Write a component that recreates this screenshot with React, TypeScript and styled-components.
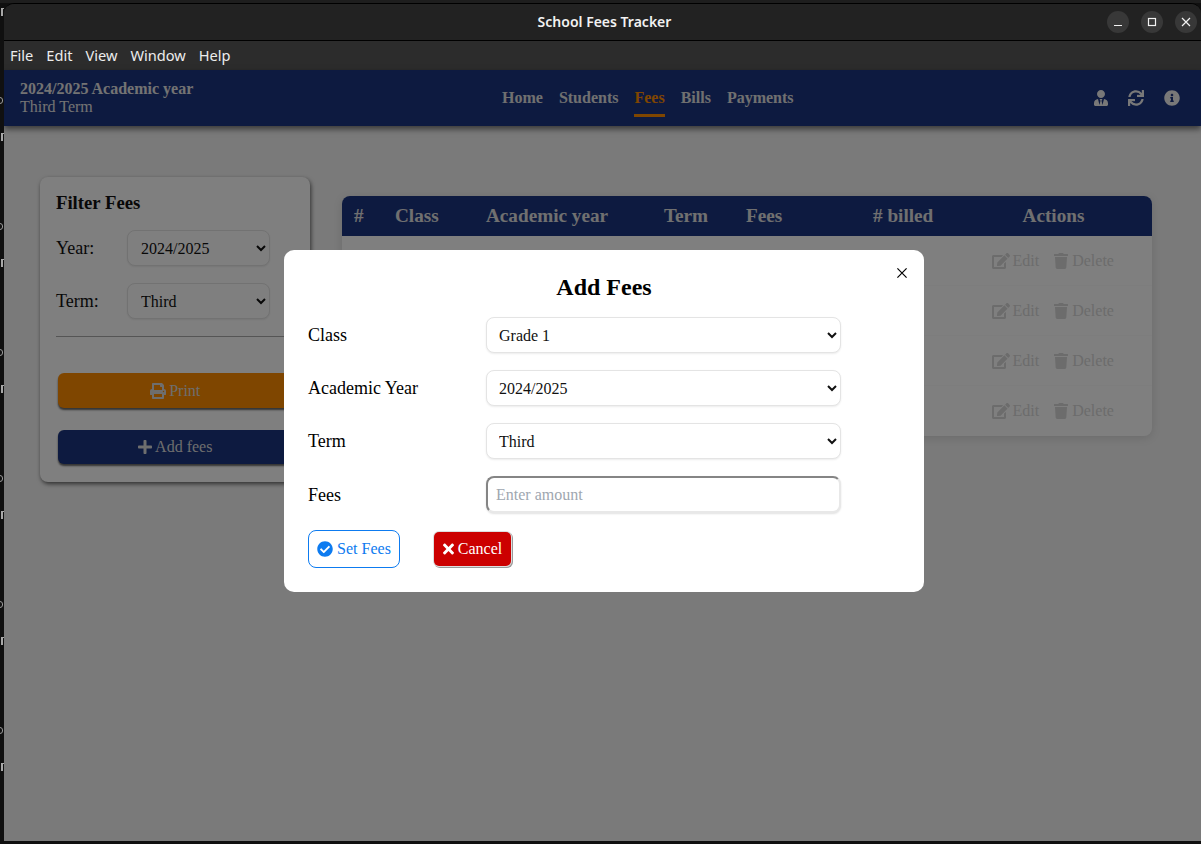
import React from 'react';
import styled, { createGlobalStyle } from 'styled-components';
import {
  FaCheckCircle,
  FaEdit,
  FaInfoCircle,
  FaPlus,
  FaPrint,
  FaSync,
  FaTimes,
  FaTrash,
  FaUserTie,
} from 'react-icons/fa';

const GlobalStyle = createGlobalStyle`
  html, body {
    margin: 0;
    padding: 0;
    height: 100%;
    overflow: hidden;
    background: #101010;
    font-family: "Liberation Serif", "Times New Roman", serif;
  }
  * { box-sizing: border-box; }
`;

const Desktop = styled.div`
  display: flex;
  height: 844px;
  padding-bottom: 3px;
  background: linear-gradient(#1e1e1e 0 3px, #101010 3px);
`;

const EdgeStrip = styled.div`
  width: 4px;
  flex: none;
  overflow: hidden;
  padding-top: 8px;
  display: flex;
  flex-direction: column;
`;

const EdgeGroup = styled.div<{ $first?: boolean }>`
  height: ${(p) => (p.$first ? 89 : 126)}px;
  flex: none;
  display: flex;
  flex-direction: column;
  gap: 29px;
`;

const EdgeRound = styled.span`
  width: 6px;
  height: 7px;
  margin-left: -3px;
  border: 1px solid #9a9a9a;
  border-radius: 3px;
`;

const EdgeHook = styled.span`
  width: 3px;
  height: 8px;
  margin-left: 1px;
  border-left: 2px solid #a8a8a8;
  border-top: 1px solid #a8a8a8;
`;

const Window = styled.div`
  flex: 1;
  margin-top: 3px;
  display: flex;
  flex-direction: column;
  border-top: 1px solid #000;
  border-radius: 10px 10px 0 0;
  overflow: hidden;
  background: #222;
`;

const TitleBar = styled.header`
  height: 37px;
  flex: none;
  position: relative;
  display: flex;
  align-items: center;
  justify-content: center;
  background: #222;
  border-bottom: 1px solid #000;
`;

const TitleText = styled.h1`
  margin: 0 0 1px 4px;
  font: 600 14px "Noto Sans", sans-serif;
  color: #f2f2f2;
`;

const WindowControls = styled.div`
  position: absolute;
  right: 4px;
  top: 7px;
  display: flex;
  gap: 12px;
`;

const WindowButton = styled.button`
  width: 22px;
  height: 22px;
  padding: 0;
  border: 0;
  border-radius: 50%;
  display: flex;
  align-items: center;
  justify-content: center;
  background: #383838;
  color: #f2f2f2;
`;

const MenuBar = styled.nav`
  height: 29px;
  flex: none;
  display: flex;
  align-items: center;
  gap: 13px;
  padding: 0 0 1px 6px;
  background: #2c2c2c;
  font: 14.6px "Noto Sans", sans-serif;
  color: #ececec;
`;

const MenuItem = styled.span``;

const AppArea = styled.div`
  flex: 1;
  position: relative;
  display: flex;
  flex-direction: column;
  background: #f4f4f4;
`;

const TopNav = styled.div`
  height: 56px;
  flex: none;
  display: grid;
  grid-template-columns: 482px auto 1fr;
  align-items: center;
  padding: 0 21px 0 16px;
  background: #1a3480;
  box-shadow: 0 3px 6px rgba(0, 0, 0, 0.55);
  color: #e6e6e6;
`;

const Session = styled.div`
  font-size: 16px;
  line-height: 18px;
  margin-top: -1px;
`;

const SessionYear = styled.div`
  font-weight: 700;
`;

const SessionTerm = styled.div``;

const NavLinks = styled.div`
  display: flex;
  gap: 16px;
`;

const NavLink = styled.a<{ $active?: boolean }>`
  height: 38px;
  padding-top: 10px;
  font-size: 16px;
  font-weight: 700;
  color: ${(p) => (p.$active ? '#ff8c00' : '#e0e0e0')};
  border-bottom: 3px solid ${(p) => (p.$active ? '#ff8c00' : 'transparent')};
`;

const NavIcons = styled.div`
  justify-self: end;
  display: flex;
  align-items: center;
  gap: 20px;
  font-size: 16px;
  color: #f0f0f0;
`;

const UserIcon = styled(FaUserTie)`
  width: 14px;
`;

const Content = styled.main`
  flex: 1;
  display: flex;
  align-items: flex-start;
  gap: 32px;
  padding: 51px 49px 0 36px;
`;

const Sidebar = styled.aside`
  width: 270px;
  height: 305px;
  flex: none;
  padding: 16px;
  border-radius: 8px;
  background: #fff;
  box-shadow: 1px 2px 4px rgba(0, 0, 0, 0.6);
`;

const SidebarTitle = styled.h3`
  margin: -1px 0 17px;
  font-size: 18.72px;
  line-height: 21px;
  color: #111;
`;

const FilterRow = styled.label`
  display: flex;
  align-items: center;
  height: 36px;
  margin-bottom: 17px;
  font-size: 18px;
  color: #111;
`;

const FilterLabel = styled.span`
  width: 71px;
`;

const Select = styled.select<{ $wide?: boolean }>`
  width: ${(p) => (p.$wide ? '355px' : '143px')};
  height: 36px;
  padding: 0 8px 0 ${(p) => (p.$wide ? 8 : 9)}px;
  border: 1px solid #e4e4e4;
  border-radius: 8px;
  outline: 0;
  background: #fff;
  box-shadow: 0 1px 2px rgba(0, 0, 0, 0.08);
  font: 16px "Liberation Serif", serif;
  color: #111;
`;

const Divider = styled.hr`
  margin: 0 0 36px;
  border: 0;
  border-top: 1px solid #aaa;
`;

const SideButton = styled.button<{ $color: string; $height: number }>`
  display: flex;
  width: 234px;
  height: ${(p) => p.$height}px;
  margin: 0 0 22px 2px;
  align-items: center;
  justify-content: center;
  gap: 3.5px;
  border: 0;
  border-radius: 6px;
  background: ${(p) => p.$color};
  box-shadow: 0 2px 2px rgba(0, 0, 0, 0.6);
  font: 16px "Liberation Serif", serif;
  color: #dcdcdc;
`;

const PlusIcon = styled(FaPlus)`
  width: 14px;
`;

const TableCard = styled.section`
  flex: 1;
  margin-top: 19px;
  border-radius: 8px;
  overflow: hidden;
  background: #fff;
  box-shadow: 0 2px 10px rgba(0, 0, 0, 0.12);
`;

const Table = styled.table`
  width: 100%;
  border-collapse: separate;
  border-spacing: 0;
  table-layout: fixed;
`;

const HeadCell = styled.th<{ $width: number; $center?: boolean }>`
  width: ${(p) => p.$width}px;
  height: 40px;
  padding: 0 12px;
  background: #1a3480;
  font-size: 19.2px;
  text-align: ${(p) => (p.$center ? 'center' : 'left')};
  color: #e0e0e0;
`;

const BodyRow = styled.tr`
  height: 50px;
  td { border-bottom: 1px solid #fbfbfb; }
  &:last-child td { border-bottom: 0; }
`;

const EmptyCell = styled.td``;

const ActionCell = styled.td`
  padding: 3px 0 0 37px;
  white-space: nowrap;
`;

const ActionLink = styled.span`
  display: inline-flex;
  align-items: center;
  gap: 2.5px;
  margin-right: 15px;
  font-size: 16px;
  color: #d8d8d8;
`;

const EditIcon = styled(FaEdit)`
  width: 18px;
`;

const TrashIcon = styled(FaTrash)`
  width: 14px;
  margin-right: 1.5px;
`;

const Overlay = styled.div`
  position: absolute;
  inset: 0;
  display: flex;
  justify-content: center;
  align-items: flex-start;
  padding: 180px 0 0 3px;
  background: rgba(0, 0, 0, 0.5);
`;

const Modal = styled.div`
  position: relative;
  width: 640px;
  height: 342px;
  padding: 24px 24px 0;
  border-radius: 10px;
  background: #fff;
`;

const ModalTitle = styled.h2`
  margin: 0 0 16px;
  height: 27px;
  font-size: 24px;
  line-height: 27px;
  text-align: center;
  color: #000;
`;

const CloseButton = styled.button`
  position: absolute;
  top: 15px;
  right: 14px;
  width: 16px;
  height: 16px;
  padding: 0;
  border: 0;
  background: none;
  display: flex;
  align-items: center;
  justify-content: center;
  color: #000;
`;

const FormRow = styled.label<{ $tall?: boolean }>`
  display: flex;
  align-items: center;
  height: ${(p) => (p.$tall ? 38 : 36)}px;
  margin-bottom: ${(p) => (p.$tall ? 16 : 17)}px;
  font-size: 18px;
  color: #000;
`;

const FormLabel = styled.span`
  width: 178px;
`;

const AmountInput = styled.input`
  width: 355px;
  height: 37px;
  align-self: flex-start;
  padding: 0 8px;
  border-width: 2px;
  border-style: solid;
  border-color: #858585 #e8e8e8 #e8e8e8 #858585;
  border-radius: 8px;
  outline: 0;
  box-shadow: 0 1px 2px rgba(0, 0, 0, 0.12);
  font: 16px "Liberation Serif", serif;
  &::placeholder { color: #a0a7b0; }
`;

const FormActions = styled.div`
  display: flex;
  align-items: center;
  gap: 34px;
`;

const SetButton = styled.button`
  width: 92px;
  height: 38px;
  display: flex;
  align-items: center;
  justify-content: center;
  gap: 4px;
  padding: 0;
  border: 1px solid #0d7bf0;
  border-radius: 8px;
  background: #fff;
  font: 16px "Liberation Serif", serif;
  color: #0d7bf0;
`;

const CancelButton = styled.button`
  width: 77px;
  height: 34px;
  display: flex;
  align-items: center;
  justify-content: center;
  gap: 4px;
  padding: 0;
  border: 0;
  border-radius: 5px;
  background: #cc0000;
  box-shadow: 0 0 0 1px #dedede, 1px 1px 0 1px #9a9a9a;
  font: 16px "Liberation Serif", serif;
  color: #fff;
`;

const CancelIcon = styled(FaTimes)`
  width: 11px;
`;

const columns = [
  { label: '#', width: 41 },
  { label: 'Class', width: 91 },
  { label: 'Academic year', width: 178 },
  { label: 'Term', width: 82 },
  { label: 'Fees', width: 127 },
  { label: '# billed', width: 94 },
  { label: 'Actions', width: 197, center: true },
];

const App = () => {
  return (
    <>
      <GlobalStyle />
      <Desktop>
        <EdgeStrip>
          {[0, 1, 2, 3, 4, 5, 6].map((i) => (
            <EdgeGroup key={i} $first={i === 0}>
              {i > 0 && <EdgeRound />}
              <EdgeHook />
            </EdgeGroup>
          ))}
        </EdgeStrip>
        <Window>
          <TitleBar>
            <TitleText>School Fees Tracker</TitleText>
            <WindowControls>
              <WindowButton aria-label="Minimize">
                <svg width="10" height="10" viewBox="0 0 10 10">
                  <path d="M1 8.5h8" stroke="currentColor" strokeWidth="1.2" />
                </svg>
              </WindowButton>
              <WindowButton aria-label="Maximize">
                <svg width="10" height="10" viewBox="0 0 10 10">
                  <rect x="1.5" y="1.5" width="7" height="7" fill="none" stroke="currentColor" strokeWidth="1.2" />
                </svg>
              </WindowButton>
              <WindowButton aria-label="Close">
                <svg width="10" height="10" viewBox="0 0 10 10">
                  <path d="M1 1l8 8M9 1l-8 8" stroke="currentColor" strokeWidth="1.2" />
                </svg>
              </WindowButton>
            </WindowControls>
          </TitleBar>
          <MenuBar>
            <MenuItem>File</MenuItem>
            <MenuItem>Edit</MenuItem>
            <MenuItem>View</MenuItem>
            <MenuItem>Window</MenuItem>
            <MenuItem>Help</MenuItem>
          </MenuBar>
          <AppArea>
            <TopNav>
              <Session>
                <SessionYear>2024/2025 Academic year</SessionYear>
                <SessionTerm>Third Term</SessionTerm>
              </Session>
              <NavLinks>
                <NavLink>Home</NavLink>
                <NavLink>Students</NavLink>
                <NavLink $active>Fees</NavLink>
                <NavLink>Bills</NavLink>
                <NavLink>Payments</NavLink>
              </NavLinks>
              <NavIcons>
                <UserIcon />
                <FaSync />
                <FaInfoCircle />
              </NavIcons>
            </TopNav>
            <Content>
              <Sidebar>
                <SidebarTitle>Filter Fees</SidebarTitle>
                <FilterRow>
                  <FilterLabel>Year:</FilterLabel>
                  <Select defaultValue="2024/2025">
                    <option>2024/2025</option>
                  </Select>
                </FilterRow>
                <FilterRow>
                  <FilterLabel>Term:</FilterLabel>
                  <Select defaultValue="Third">
                    <option>Third</option>
                  </Select>
                </FilterRow>
                <Divider />
                <SideButton $color="#ff8c00" $height={35}>
                  <FaPrint /> Print
                </SideButton>
                <SideButton $color="#1a3480" $height={34}>
                  <PlusIcon /> Add fees
                </SideButton>
              </Sidebar>
              <TableCard>
                <Table>
                  <thead>
                    <tr>
                      {columns.map((c) => (
                        <HeadCell key={c.label} $width={c.width} $center={c.center}>
                          {c.label}
                        </HeadCell>
                      ))}
                    </tr>
                  </thead>
                  <tbody>
                    {[0, 1, 2, 3].map((row) => (
                      <BodyRow key={row}>
                        <EmptyCell colSpan={6} />
                        <ActionCell>
                          <ActionLink>
                            <EditIcon /> Edit
                          </ActionLink>
                          <ActionLink>
                            <TrashIcon /> Delete
                          </ActionLink>
                        </ActionCell>
                      </BodyRow>
                    ))}
                  </tbody>
                </Table>
              </TableCard>
            </Content>
            <Overlay>
              <Modal>
                <CloseButton aria-label="Close">
                  <svg width="10" height="10" viewBox="0 0 10 10">
                    <path d="M.4.4l9.2 9.2M9.6.4L.4 9.6" stroke="currentColor" strokeWidth="1.2" />
                  </svg>
                </CloseButton>
                <ModalTitle>Add Fees</ModalTitle>
                <FormRow>
                  <FormLabel>Class</FormLabel>
                  <Select $wide defaultValue="Grade 1">
                    <option>Grade 1</option>
                  </Select>
                </FormRow>
                <FormRow>
                  <FormLabel>Academic Year</FormLabel>
                  <Select $wide defaultValue="2024/2025">
                    <option>2024/2025</option>
                  </Select>
                </FormRow>
                <FormRow>
                  <FormLabel>Term</FormLabel>
                  <Select $wide defaultValue="Third">
                    <option>Third</option>
                  </Select>
                </FormRow>
                <FormRow $tall>
                  <FormLabel>Fees</FormLabel>
                  <AmountInput placeholder="Enter amount" />
                </FormRow>
                <FormActions>
                  <SetButton>
                    <FaCheckCircle size={16} /> Set Fees
                  </SetButton>
                  <CancelButton>
                    <CancelIcon /> Cancel
                  </CancelButton>
                </FormActions>
              </Modal>
            </Overlay>
          </AppArea>
        </Window>
      </Desktop>
    </>
  );
};

export default App;
